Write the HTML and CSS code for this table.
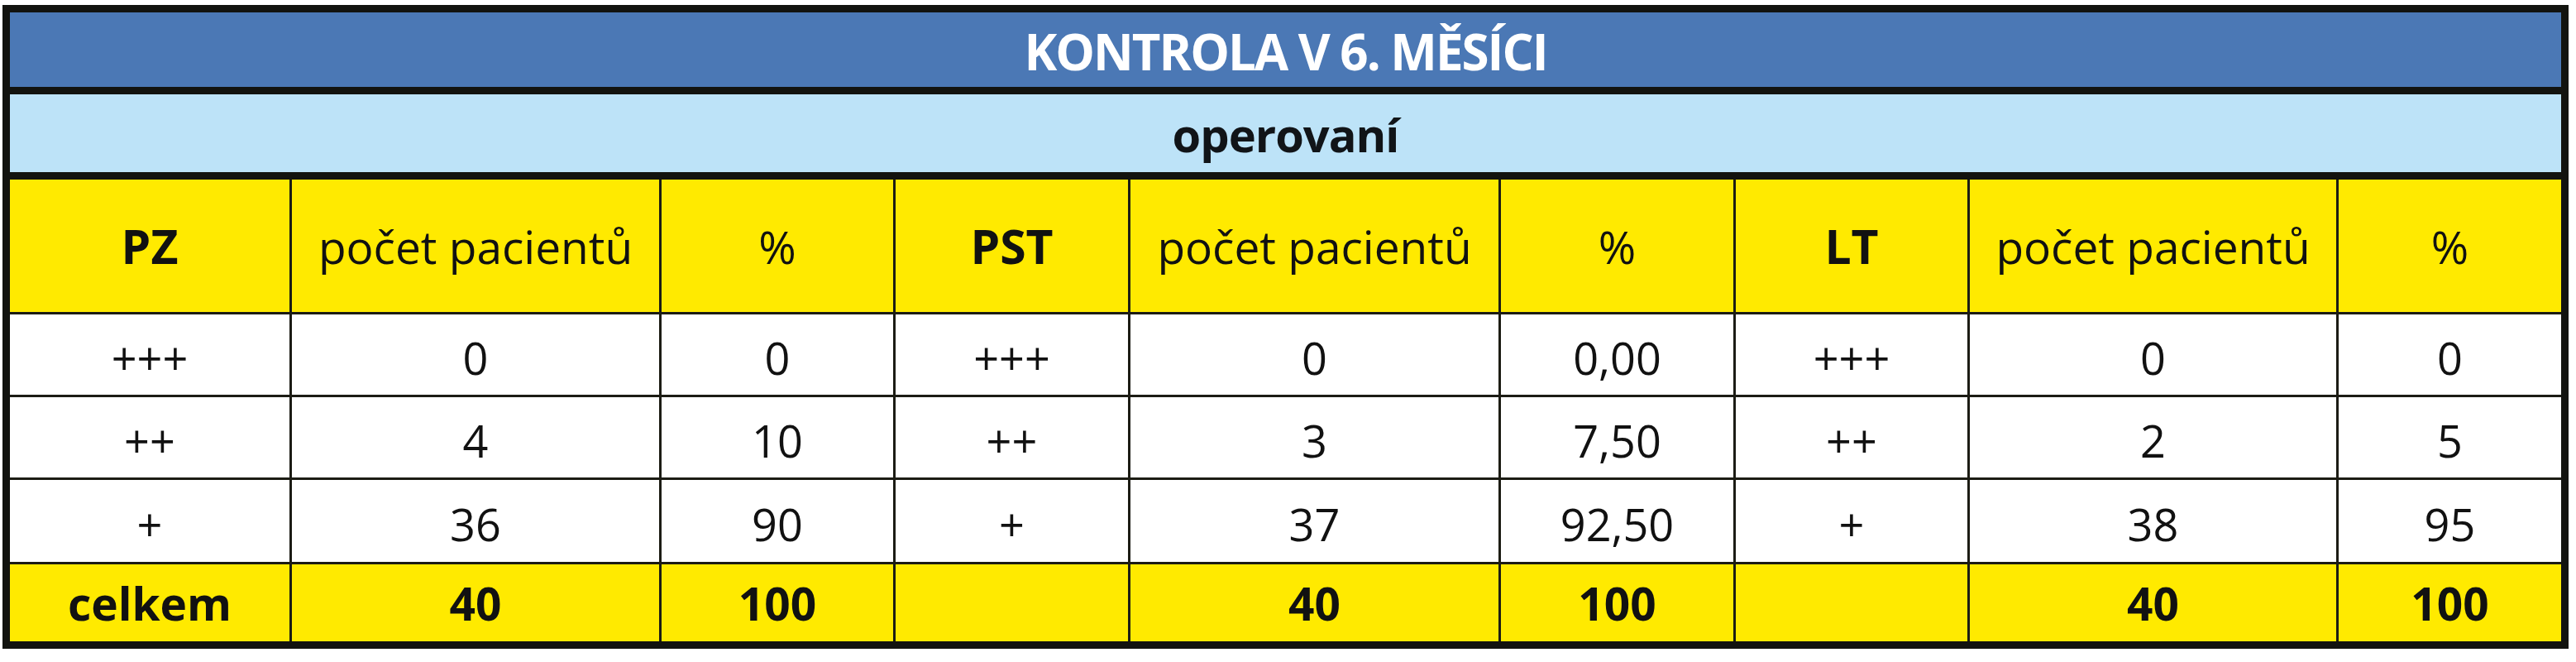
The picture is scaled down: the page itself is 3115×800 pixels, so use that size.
FILE: index.html
```html
<!DOCTYPE html>
<html lang="cs">
<head>
<meta charset="utf-8">
<title>Kontrola v 6. měsíci</title>
<link rel="stylesheet" href="styles.css">
</head>
<body>
<div class="frame">
  <div class="title">KONTROLA V 6. MĚSÍCI</div>
  <div class="subtitle">operovaní</div>
  <div class="grid">
    <div class="cell head bold">PZ</div>
    <div class="cell head">počet pacientů</div>
    <div class="cell head">%</div>
    <div class="cell head bold">PST</div>
    <div class="cell head">počet pacientů</div>
    <div class="cell head">%</div>
    <div class="cell head bold">LT</div>
    <div class="cell head">počet pacientů</div>
    <div class="cell head">%</div>

    <div class="cell r1">+++</div>
    <div class="cell r1">0</div>
    <div class="cell r1">0</div>
    <div class="cell r1">+++</div>
    <div class="cell r1">0</div>
    <div class="cell r1">0,00</div>
    <div class="cell r1">+++</div>
    <div class="cell r1">0</div>
    <div class="cell r1">0</div>

    <div class="cell r2">++</div>
    <div class="cell r2">4</div>
    <div class="cell r2">10</div>
    <div class="cell r2">++</div>
    <div class="cell r2">3</div>
    <div class="cell r2">7,50</div>
    <div class="cell r2">++</div>
    <div class="cell r2">2</div>
    <div class="cell r2">5</div>

    <div class="cell r3">+</div>
    <div class="cell r3">36</div>
    <div class="cell r3">90</div>
    <div class="cell r3">+</div>
    <div class="cell r3">37</div>
    <div class="cell r3">92,50</div>
    <div class="cell r3">+</div>
    <div class="cell r3">38</div>
    <div class="cell r3">95</div>

    <div class="cell total">celkem</div>
    <div class="cell total">40</div>
    <div class="cell total">100</div>
    <div class="cell total"></div>
    <div class="cell total">40</div>
    <div class="cell total">100</div>
    <div class="cell total"></div>
    <div class="cell total">40</div>
    <div class="cell total">100</div>
  </div>
</div>
</body>
</html>
```

FILE: styles.css
```css
html, body {
  margin: 0;
  padding: 0;
  background: #ffffff;
}

body {
  font-family: "Open Sans", "Noto Sans", "DejaVu Sans", sans-serif;
  color: #111111;
}

.frame {
  margin: 6px 0 0 3px;
  width: 3085px;
  padding: 9px;
  background: #12130f;
  display: flex;
  flex-direction: column;
  gap: 9px;
}

.title {
  height: 90px;
  background: #4b78b5;
  color: #ffffff;
  font-weight: 700;
  font-size: 60px;
  letter-spacing: -2px;
  display: flex;
  align-items: center;
  justify-content: center;
  padding-top: 4px;
  box-sizing: border-box;
}

.subtitle {
  height: 94px;
  background: #bde3f8;
  color: #111418;
  font-weight: 700;
  font-size: 56px;
  letter-spacing: -1px;
  display: flex;
  align-items: center;
  justify-content: center;
  padding-top: 2px;
  box-sizing: border-box;
}

.grid {
  display: grid;
  grid-template-columns: 338px 444px 280px 281px 445px 281px 280px 443px 269px;
  grid-template-rows: 160px 97px 97px 99px 93px;
  gap: 3px;
  background: #1c1c14;
}

.cell {
  display: flex;
  align-items: center;
  justify-content: center;
  font-size: 54px;
  background: #ffffff;
  white-space: nowrap;
}

.head {
  background: #ffea00;
  font-size: 55px;
}

.r1, .r2, .r3 {
  padding-top: 6px;
  box-sizing: border-box;
}

.bold {
  font-weight: 700;
  font-size: 57px;
}

.total {
  background: #ffea00;
  font-weight: 700;
  font-size: 55px;
}
```
